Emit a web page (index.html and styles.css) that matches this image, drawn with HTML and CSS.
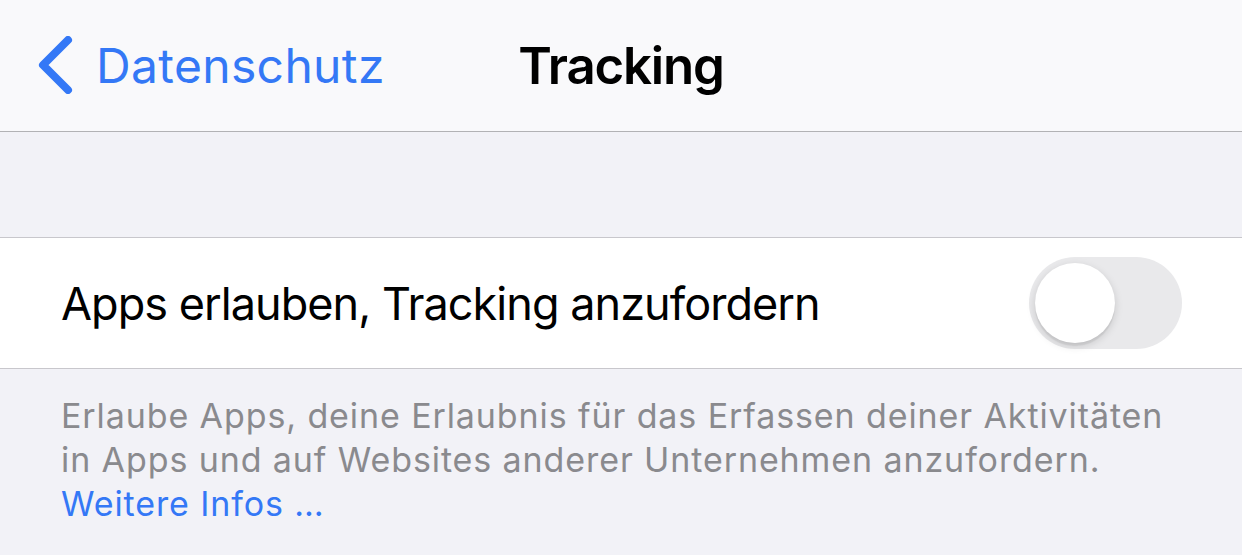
FILE: index.html
```html
<!DOCTYPE html>
<html lang="de">
<head>
<meta charset="utf-8">
<title>Tracking</title>
<link rel="stylesheet" href="styles.css">
</head>
<body>
<header class="nav">
  <a class="back" href="#">
    <svg class="chev" width="36" height="58" viewBox="0 0 36 58"><path d="M31 4 L6 29 L31 54" fill="none" stroke="#3478f6" stroke-width="8" stroke-linecap="round" stroke-linejoin="round"/></svg>
    <span class="back-label">Datenschutz</span>
  </a>
  <h1 class="title">Tracking</h1>
  <div class="nav-right"></div>
</header>
<div class="spacer"></div>
<section class="group">
  <div class="row">
    <span class="row-label">Apps erlauben, Tracking anzufordern</span>
    <span class="switch"><span class="knob"></span></span>
  </div>
</section>
<p class="footer">Erlaube Apps, deine Erlaubnis für das Erfassen deiner Aktivitäten in Apps und auf Websites anderer Unternehmen anzufordern.<br><a class="link" href="#">Weitere Infos …</a></p>
</body>
</html>
```
FILE: styles.css
```css
html, body {
  margin: 0;
  padding: 0;
}
body {
  background: #f2f2f7;
  font-family: Inter, "Noto Sans", sans-serif;
  width: 1242px;
  height: 555px;
  overflow: hidden;
}
.nav {
  height: 131px;
  background: #f9f9fb;
  border-bottom: 1px solid #b2b2b5;
  display: grid;
  grid-template-columns: 1fr auto 1fr;
  align-items: center;
}
.back {
  display: flex;
  align-items: center;
  text-decoration: none;
  color: #3478f6;
  padding-left: 37px;
}
.chev {
  display: block;
  margin-top: -2px;
}
.back-label {
  font-size: 48px;
  margin-left: 23px;
  letter-spacing: 0.35px;
}
.title {
  margin: 0;
  font-size: 51px;
  font-weight: 600;
  color: #000;
  letter-spacing: -1.2px;
}
.spacer {
  height: 105px;
}
.group {
  background: #fff;
  border-top: 1px solid #c8c7cc;
  border-bottom: 1px solid #c8c7cc;
}
.row {
  height: 130px;
  display: flex;
  align-items: center;
  justify-content: space-between;
  padding: 0 60px 0 61px;
}
.row-label {
  font-size: 45px;
  color: #000;
  letter-spacing: -0.95px;
}
.switch {
  width: 153px;
  height: 92px;
  border-radius: 46px;
  background: #e9e9eb;
  position: relative;
  display: block;
}
.knob {
  position: absolute;
  left: 6px;
  top: 6px;
  width: 80px;
  height: 80px;
  border-radius: 50%;
  background: #fff;
  box-shadow: 0 3px 8px rgba(0,0,0,0.15), 0 3px 1px rgba(0,0,0,0.06);
}
.footer {
  margin: 0;
  padding: 25px 62px 0 61px;
  font-size: 34px;
  line-height: 44px;
  color: #8a8a8e;
  letter-spacing: 0.9px;
}
.link {
  color: #3478f6;
  text-decoration: none;
}
```
